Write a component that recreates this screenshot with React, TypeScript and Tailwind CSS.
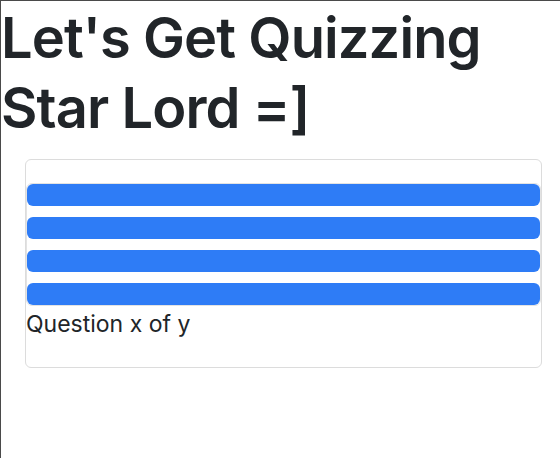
export default function App() {
  const answers = [0, 1, 2, 3];

  return (
    <div className="min-h-screen w-full border-l border-t border-[#4a4a4a] bg-white text-[#212529] font-['Inter','Liberation_Sans',sans-serif]">
      <h1 className="pt-[2px] text-[56px] font-semibold leading-[70px] tracking-[-0.9px]">
        Let's Get Quizzing
        <br />
        Star Lord =]
      </h1>

      {/* Quiz card */}
      <div className="ml-[24px] mr-[18px] mt-[16px] rounded-[6px] border border-[#dcdcdc] pt-[23px] pb-[26px]">
        <div className="flex flex-col gap-[11px] rounded-[6px] border border-[#e3e3e3]">
          {answers.map((a) => (
            <button key={a} className="h-[22px] w-full rounded-[6px] bg-[#2e7cf6]" />
          ))}
        </div>
        <p className="pt-[1px] text-[23px] leading-[34px]">Question x of y</p>
      </div>
    </div>
  );
}
